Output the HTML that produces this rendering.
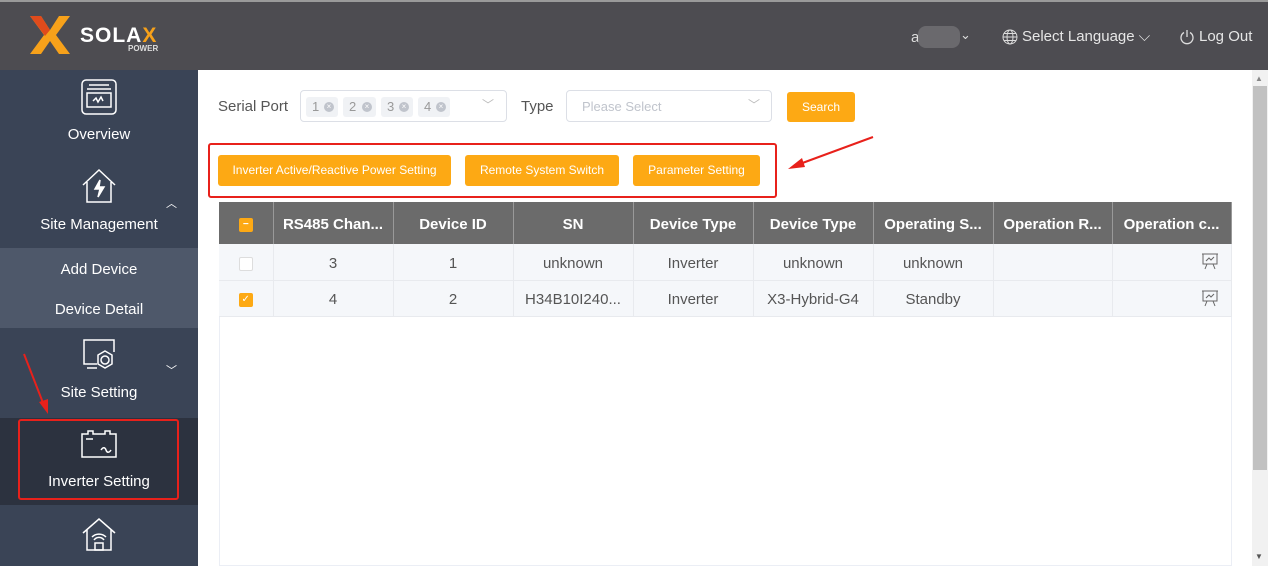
<!DOCTYPE html>
<html><head><meta charset="utf-8"><style>
*{box-sizing:border-box;margin:0;padding:0}
body{width:1268px;height:566px;overflow:hidden;font-family:"Liberation Sans",sans-serif;background:#fff;position:relative}
.hdr{position:absolute;left:0;top:0;width:1268px;height:70px;background:#4d4c51;border-top:2px solid #9a9a9a}
.side{position:absolute;left:0;top:70px;width:198px;height:496px;background:#3a4456;color:#fff;font-size:15px}
.item{position:absolute;left:0;width:198px;text-align:center}
.sub{position:absolute;left:0;top:178px;width:198px;height:80px;background:#4e586a}
.act{position:absolute;left:0;top:348px;width:198px;height:87px;background:#2c323f}
.abs{position:absolute}
.tag{position:absolute;top:97px;height:20px;background:#f0f2f5;border-radius:3px;font-size:13px;color:#999;padding-left:6px;line-height:20px}
.tag i{position:absolute;right:4px;top:5px;width:10px;height:10px;border-radius:50%;background:#c0c4cc;font-style:normal;font-size:8px;color:#fff;line-height:10px;text-align:center}
.btn{position:absolute;top:155px;height:31px;background:#fda914;border-radius:3px;color:#fff;font-size:12px;text-align:center;line-height:31px}
table{position:absolute;left:219px;top:202px;width:1012px;border-collapse:collapse;font-size:15px;table-layout:fixed}
th{background:#6b6b6b;color:#fff;height:42px;font-weight:bold;border-right:1px solid #999;white-space:nowrap;overflow:hidden;padding-top:2px}
td{background:#f5f7fa;color:#555;height:36px;text-align:center;border-right:1px solid #e8eaee;border-bottom:1px solid #e8eaee;padding-top:3px}
.cb{display:inline-block;width:14px;height:14px;border:1px solid #ddd;background:#fff;border-radius:2px;vertical-align:middle}
.cbo{background:#fda914;border-color:#fda914;color:#fff;font-size:10px;line-height:12px}
</style></head><body>
<div class="hdr">
<svg class="abs" style="left:28px;top:12px" width="44" height="42" viewBox="0 0 44 42"><path d="M2 2h11l9 14 9-14h11L28 21l14 19H31l-9-13-9 13H2l14-19z" fill="#f7a11a"/><path d="M2 2h11l9 14-5 6z" fill="#e04b1c"/></svg>
<div class="abs" style="left:80px;top:22px;color:#fff;font-weight:bold;font-size:21px;letter-spacing:1px">SOLA<span style="color:#f7a11a">X</span></div>
<div class="abs" style="left:128px;top:42px;color:#ddd;font-size:8px;font-weight:bold">POWER</div>
<div class="abs" style="left:911px;top:27px;color:#ddd;font-size:15px">a</div>
<div class="abs" style="left:918px;top:24px;width:42px;height:22px;background:#6a696d;border-radius:8px"></div>
<div class="abs" style="left:960px;top:25px;color:#ddd;font-size:13px">⌄</div>
<svg class="abs" style="left:1002px;top:27px" width="16" height="16" viewBox="0 0 16 16" fill="none" stroke="#ddd"><circle cx="8" cy="8" r="7"/><ellipse cx="8" cy="8" rx="3" ry="7"/><path d="M1 8h14M2 4.5h12M2 11.5h12"/></svg>
<div class="abs" style="left:1022px;top:26px;color:#e6e6e6;font-size:15px">Select Language ⌵</div>
<svg class="abs" style="left:1179px;top:27px" width="16" height="16" viewBox="0 0 16 16" fill="none" stroke="#ddd" stroke-width="1.3"><path d="M5 3.5A6 6 0 1 0 11 3.5M8 1v7"/></svg>
<div class="abs" style="left:1199px;top:26px;color:#e6e6e6;font-size:15px">Log Out</div>
</div>
<div class="side">
<div class="sub"></div><div class="act"></div>
<svg class="abs" style="left:81px;top:9px" width="36" height="36" viewBox="0 0 36 36" fill="none" stroke="#fff" stroke-width="1.5"><rect x="1" y="1" width="34" height="34" rx="4"/><path d="M8 6h20M6 10h24"/><rect x="6" y="14" width="24" height="14"/><path d="M12 22l3-3 2 4 3-5 2 4"/></svg>
<div class="item" style="top:56px">Overview</div>
<svg class="abs" style="left:81px;top:98px" width="36" height="36" viewBox="0 0 36 36" fill="none" stroke="#fff" stroke-width="1.5"><path d="M2 17L18 2l16 15M6 14v20h24V14"/><path d="M19 12l-5 9h5l-2 8 6-10h-5z" fill="#fff"/></svg>
<div class="item" style="top:146px">Site Management</div>
<div class="abs" style="left:166px;top:125px;font-size:11px">︿</div>
<div class="item" style="top:191px">Add Device</div>
<div class="item" style="top:231px">Device Detail</div>
<svg class="abs" style="left:81px;top:268px" width="36" height="34" viewBox="0 0 36 34" fill="none" stroke="#fff" stroke-width="1.5"><path d="M16 26H3V2h30v12M6 30h10"/><circle cx="24" cy="22" r="4"/><path d="M24 13l7 4v9l-7 4-7-4v-9z"/></svg>
<div class="item" style="top:314px">Site Setting</div>
<div class="abs" style="left:166px;top:292px;font-size:11px">﹀</div>
<svg class="abs" style="left:81px;top:360px" width="36" height="28" viewBox="0 0 36 28" fill="none" stroke="#fff" stroke-width="1.5"><path d="M1 4h6V1h5v3h12V1h5v3h6v23H1z M5 9h7M20 20c2-3 4-3 5 0s3 3 5 0"/></svg>
<div class="item" style="top:403px">Inverter Setting</div>
<div class="abs" style="left:18px;top:349px;width:161px;height:81px;border:2px solid #e8211b;border-radius:3px"></div>
<svg class="abs" style="left:20px;top:280px" width="30" height="65"><path d="M4 4L25 58" stroke="#e8211b" stroke-width="2"/><path d="M19 52l9 12 0-15z" fill="#e8211b"/></svg>
<svg class="abs" style="left:81px;top:447px" width="36" height="36" viewBox="0 0 36 36" fill="none" stroke="#fff" stroke-width="1.5"><path d="M2 16L18 2l16 14M6 13v20h24V13"/><path d="M11 20a10 10 0 0 1 14 0M13 23a6 6 0 0 1 10 0"/><rect x="14" y="26" width="8" height="7"/></svg>
</div>
<div class="abs" style="left:1252px;top:70px;width:16px;height:496px;background:#f1f1f1"></div>
<div class="abs" style="left:1253px;top:86px;width:14px;height:384px;background:#c1c1c1"></div>
<div class="abs" style="left:1255px;top:74px;font-size:8px;color:#888">▲</div>
<div class="abs" style="left:1255px;top:552px;font-size:8px;color:#555">▼</div>

<div class="abs" style="left:218px;top:98px;font-size:15px;color:#555">Serial Port</div>
<div class="abs" style="left:300px;top:90px;width:207px;height:32px;border:1px solid #dcdfe6;border-radius:4px"></div>
<div class="tag" style="left:306px;width:32px">1<i>×</i></div>
<div class="tag" style="left:343px;width:33px">2<i>×</i></div>
<div class="tag" style="left:381px;width:32px">3<i>×</i></div>
<div class="tag" style="left:418px;width:32px">4<i>×</i></div>
<div class="abs" style="left:482px;top:96px;color:#bbb;font-size:12px">﹀</div>
<div class="abs" style="left:521px;top:98px;font-size:15px;color:#555">Type</div>
<div class="abs" style="left:566px;top:90px;width:206px;height:32px;border:1px solid #dcdfe6;border-radius:4px;color:#c0c4cc;font-size:13px;padding:8px 15px">Please Select</div>
<div class="abs" style="left:748px;top:96px;color:#bbb;font-size:12px">﹀</div>
<div class="btn" style="left:787px;top:92px;width:68px;height:30px;line-height:30px">Search</div>

<div class="abs" style="left:208px;top:143px;width:569px;height:55px;border:2px solid #e8211b;border-radius:3px"></div>
<div class="btn" style="left:218px;width:233px">Inverter Active/Reactive Power Setting</div>
<div class="btn" style="left:465px;width:154px">Remote System Switch</div>
<div class="btn" style="left:633px;width:127px">Parameter Setting</div>
<svg class="abs" style="left:785px;top:134px" width="92" height="40"><path d="M88 3L12 31" stroke="#e8211b" stroke-width="2"/><path d="M3 35l14-11 3 9z" fill="#e8211b"/></svg>

<div class="abs" style="left:219px;top:316px;width:1013px;height:250px;border:1px solid #ebeef5;border-top:none"></div>
<table>
<colgroup><col style="width:54px"><col style="width:120px"><col style="width:120px"><col style="width:120px"><col style="width:120px"><col style="width:120px"><col style="width:120px"><col style="width:119px"><col style="width:119px"></colgroup>
<tr><th><span class="cb cbo">−</span></th><th>RS485 Chan...</th><th>Device ID</th><th>SN</th><th>Device Type</th><th>Device Type</th><th>Operating S...</th><th>Operation R...</th><th>Operation c...</th></tr>
<tr><td><span class="cb"></span></td><td>3</td><td>1</td><td>unknown</td><td>Inverter</td><td>unknown</td><td>unknown</td><td></td><td style="text-align:right;padding-right:12px"><svg width="18" height="18" viewBox="0 0 18 18" fill="none" stroke="#666"><path d="M1 2h16M2 2v10h14V2M5 9l3-3 2 2 3-3M6 12l-2 5M12 12l2 5"/></svg></td></tr>
<tr><td><span class="cb cbo">✓</span></td><td>4</td><td>2</td><td>H34B10I240...</td><td>Inverter</td><td>X3-Hybrid-G4</td><td>Standby</td><td></td><td style="text-align:right;padding-right:12px"><svg width="18" height="18" viewBox="0 0 18 18" fill="none" stroke="#666"><path d="M1 2h16M2 2v10h14V2M5 9l3-3 2 2 3-3M6 12l-2 5M12 12l2 5"/></svg></td></tr>
</table>
</body></html>
